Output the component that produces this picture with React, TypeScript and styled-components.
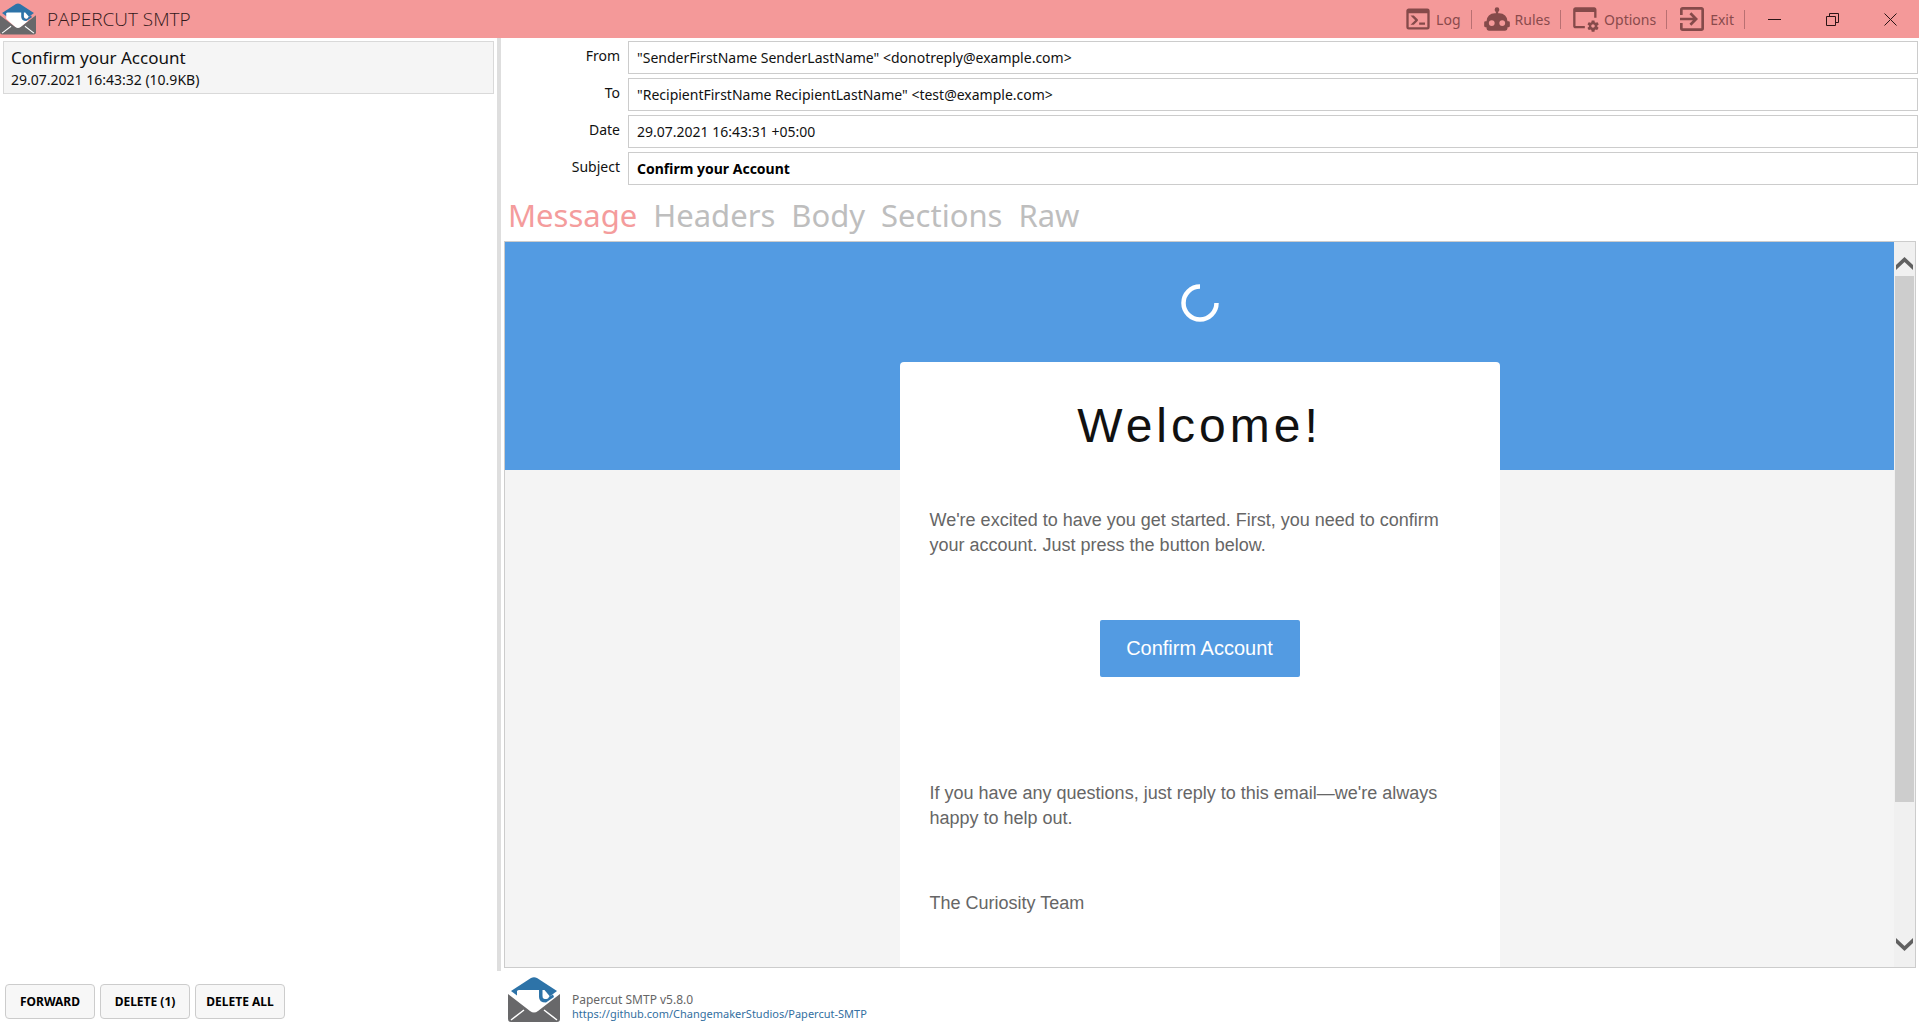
import React from "react";
import styled, { createGlobalStyle, css } from "styled-components";

const ui = `"Noto Sans", "Open Sans", sans-serif`;
const mail = `"Liberation Sans", Arial, sans-serif`;
const blue = "#539be2";

const GlobalStyle = createGlobalStyle`
  *, *::before, *::after { box-sizing: border-box; }
  body { margin: 0; background: #fff; color: #111; font-family: ${ui}; }
  button, input { font-family: inherit; color: inherit; margin: 0; }
  h1, h2, p { margin: 0; }
`;

const Window = styled.div`
  display: flex;
  flex-direction: column;
  height: 100vh;
  overflow: hidden;
`;

const TitleBar = styled.header`
  display: flex;
  align-items: center;
  flex: none;
  height: 38px;
  background: #f49999;
`;

const TitleText = styled.h1`
  flex: 1;
  padding-left: 11px;
  font: 300 19px/38px "Open Sans", "Noto Sans", sans-serif;
  color: #33191b;
`;

const Commands = styled.nav`
  display: flex;
  align-items: center;
`;

const Command = styled.button`
  display: flex;
  align-items: center;
  gap: 4px;
  height: 38px;
  padding: 0 11px;
  border: 0;
  background: none;
  font-size: 14px;
  color: #8a4a4c;
  position: relative;
  &::after {
    content: "";
    position: absolute;
    right: 0;
    top: 10px;
    width: 1px;
    height: 19px;
    background: #b97072;
  }
  svg { width: 28px; height: 28px; fill: #854a4a; }
`;

const Caption = styled.button`
  display: flex;
  align-items: center;
  justify-content: center;
  width: 58px;
  height: 38px;
  padding: 0;
  border: 0;
  background: none;
  svg { width: 13px; height: 13px; fill: none; stroke: #2b1516; }
`;

const Main = styled.div`
  display: flex;
  flex: 1;
  min-height: 0;
`;

const Sidebar = styled.aside`
  display: flex;
  flex-direction: column;
  flex: none;
  width: 501px;
`;

const ListArea = styled.div`
  display: flex;
  flex: 1;
`;

const MessageList = styled.ul`
  flex: 1;
  margin: 0;
  padding: 3px 3px 0;
  list-style: none;
`;

const Splitter = styled.div`
  width: 4px;
  background: #dedede;
`;

const MessageItem = styled.button`
  display: block;
  width: 100%;
  height: 53px;
  padding: 4px 7px;
  border: 1px solid #d9d9d9;
  background: #f5f5f5;
  text-align: left;
`;

const ItemSubject = styled.span`
  display: block;
  font-size: 17px;
  line-height: 24px;
`;

const ItemMeta = styled.span`
  display: block;
  font-size: 14px;
  line-height: 20px;
`;

const Actions = styled.footer`
  display: flex;
  gap: 5px;
  height: 58px;
  padding: 13px 5px 0;
`;

const ActionButton = styled.button`
  width: 90px;
  height: 35px;
  padding: 0 0 1px;
  border: 1px solid #ccc;
  border-radius: 4px;
  background: #f7f7f7;
  font-size: 12px;
  font-weight: 700;
  color: #000;
`;

const Detail = styled.main`
  display: flex;
  flex-direction: column;
  flex: 1;
  min-width: 0;
  padding-left: 3px;
`;

const Fields = styled.div`
  display: grid;
  grid-template-columns: 116px 1fr;
  gap: 4px 8px;
  padding: 3px 1px 0 0;
`;

const FieldLabel = styled.label`
  padding-top: 5px;
  font-size: 14px;
  line-height: 20px;
  text-align: right;
`;

const FieldInput = styled.input<{ $strong?: boolean }>`
  width: 100%;
  height: 33px;
  padding: 0 8px;
  border: 1px solid #ccc;
  background: #fff;
  font-size: 14px;
  ${(p) => p.$strong && css`font-weight: 700; color: #000;`}
`;

const Tabs = styled.div`
  display: flex;
  gap: 16px;
  height: 56px;
  padding: 4px 4px 0;
`;

const Tab = styled.button<{ $active?: boolean }>`
  padding: 0;
  border: 0;
  background: none;
  font-size: 31px;
  line-height: 48px;
  color: ${(p) => (p.$active ? "#f49c9c" : "#bebebe")};
`;

const Preview = styled.section`
  display: flex;
  flex: 1;
  min-height: 0;
  margin-right: 3px;
  border: 1px solid #ccc;
`;

const MailPage = styled.div`
  flex: 1;
  overflow: hidden;
  background: linear-gradient(${blue} 228px, #f4f4f4 228px);
  font-family: ${mail};
  font-size: 18px;
  line-height: 25px;
  color: #666;
`;

const MailLogo = styled.div`
  display: flex;
  justify-content: center;
  height: 120px;
  padding-top: 42px;
  svg { width: 38px; height: 38px; }
`;

const Card = styled.article`
  width: 600px;
  height: 100%;
  margin: 0 auto;
  padding: 40px 30px;
  border-radius: 4px 4px 0 0;
  background: #fff;
`;

const Welcome = styled.h2`
  padding-bottom: 58px;
  font-size: 48px;
  font-weight: 400;
  line-height: 48px;
  letter-spacing: 4px;
  text-align: center;
  color: #111;
`;

const Confirm = styled.a`
  display: block;
  width: 200px;
  height: 57px;
  margin: 62px auto 104px;
  border-radius: 2px;
  background: ${blue};
  font-size: 20px;
  line-height: 56px;
  text-align: center;
  text-decoration: none;
  color: #fff;
`;

const Signature = styled.p`
  padding-top: 60px;
`;

const ScrollBar = styled.div`
  display: flex;
  flex-direction: column;
  flex: none;
  width: 21px;
  background: #f0f0f0;
`;

const ScrollArrow = styled.button`
  display: flex;
  justify-content: center;
  height: 34px;
  padding: 15px 0 0;
  border: 0;
  background: none;
  svg { width: 17px; height: 13px; fill: #606060; }
  &:last-child { padding-top: 5px; }
`;

const ScrollTrack = styled.div`
  flex: 1;
  padding: 0 1px;
`;

const ScrollThumb = styled.div`
  height: 80%;
  background: #cdcdcd;
`;

const About = styled.footer`
  display: flex;
  flex: none;
  gap: 12px;
  height: 61px;
  padding: 9px 4px 0;
  svg { width: 52px; height: 45px; }
`;

const AboutText = styled.div`
  padding-top: 15px;
  font-size: 12px;
  line-height: 15px;
  color: #666;
  a { display: block; font-size: 11px; line-height: 14px; color: #336f9f; text-decoration: none; }
`;

const BarLogo = styled.span`
  display: flex;
  svg { width: 36px; height: 32px; }
`;

const Envelope = () => (
  <svg viewBox="0 0 52 45" aria-hidden="true">
    <path d="M3 14 23 1Q26-.5 29 1L49 14 41 20H11Z" fill="#2d73a8" />
    <path d="M9 14Q10 13 11 13H31V21L41 25 29 35Q26 37 23 35L9 22Z" fill="#fff" />
    <path d="M31 12H34.500V19Q34.500 22 38 22L40.500 20 45 17.500 46 20 38 25.500Q31 25.500 31 20Z" fill="#2d73a8" />
    <path d="M34.500 13H36.500L41.500 19 40 21.500 38 22Q34.500 22 34.500 19Z" fill="#fff" />
    <path d="M0 17 22 34Q26 37 30 34L52 17V42Q52 45 49 45H3Q0 45 0 42Z" fill="#68686a" />
    <path d="M3 43 16 33M49 43 36 33" stroke="#fff" strokeWidth="1.5" />
  </svg>
);

const commands = [
  { label: "Log", box: "0 0 24 24", path: "M20 19V7H4V19H20M20 3A2 2 0 0 1 22 5V19A2 2 0 0 1 20 21H4A2 2 0 0 1 2 19V5C2 3.89 2.9 3 4 3H20M13 17V15H18V17H13M9.58 13L5.57 9H8.4L11.7 12.3C12.09 12.69 12.09 13.33 11.7 13.72L8.42 17H5.59L9.58 13Z" },
  { label: "Rules", box: "0 0 24 24", path: "M12 2A2 2 0 0 1 14 4C14 4.74 13.6 5.39 13 5.73V7H14A7 7 0 0 1 21 14H22A1 1 0 0 1 23 15V18A1 1 0 0 1 22 19H21V20A2 2 0 0 1 19 22H5A2 2 0 0 1 3 20V19H2A1 1 0 0 1 1 18V15A1 1 0 0 1 2 14H3A7 7 0 0 1 10 7H11V5.73C10.4 5.39 10 4.74 10 4A2 2 0 0 1 12 2M7.5 13A2.5 2.5 0 1 0 7.5 18A2.5 2.5 0 0 0 7.5 13M16.5 13A2.5 2.5 0 1 0 16.5 18A2.5 2.5 0 0 0 16.5 13Z" },
  { label: "Options", box: "0 0 24 24", path: "M21.7 18.6V17.6L22.8 16.8C22.9 16.7 23 16.6 22.9 16.5L21.9 14.8C21.9 14.7 21.7 14.7 21.6 14.7L20.4 15.2C20.1 15 19.8 14.8 19.5 14.7L19.3 13.4C19.3 13.3 19.2 13.2 19.1 13.2H17.1C16.9 13.2 16.8 13.3 16.8 13.4L16.6 14.7C16.3 14.9 16.1 15 15.8 15.2L14.6 14.7C14.5 14.7 14.4 14.7 14.3 14.8L13.3 16.5C13.3 16.6 13.3 16.7 13.4 16.8L14.5 17.6V18.6L13.4 19.4C13.3 19.5 13.2 19.6 13.3 19.7L14.3 21.4C14.4 21.5 14.5 21.5 14.6 21.5L15.8 21C16 21.2 16.3 21.4 16.6 21.5L16.8 22.8C16.9 22.9 17 23 17.1 23H19.1C19.2 23 19.3 22.9 19.3 22.8L19.5 21.5C19.8 21.3 20 21.2 20.3 21L21.5 21.4C21.6 21.4 21.7 21.4 21.8 21.3L22.8 19.6C22.9 19.5 22.9 19.4 22.8 19.4L21.7 18.6M18 19.5C17.2 19.5 16.5 18.8 16.5 18S17.2 16.5 18 16.5 19.5 17.2 19.5 18 18.8 19.5 18 19.5M11 18H3V6H19V11H21V4C21 2.9 20.1 2 19 2H3C1.9 2 1 2.9 1 4V18C1 19.1 1.9 20 3 20H11V18Z" },
  { label: "Exit", box: "1.5 1.5 21 21", path: "M19 3H5C3.89 3 3 3.89 3 5V9H5V5H19V19H5V15H3V19A2 2 0 0 0 5 21H19A2 2 0 0 0 21 19V5C21 3.89 20.1 3 19 3M10.08 15.58L11.5 17L16.5 12L11.5 7L10.08 8.41L12.67 11H3V13H12.67L10.08 15.58Z" },
];

const fields = [
  { id: "from", label: "From", value: '"SenderFirstName SenderLastName" <donotreply@example.com>' },
  { id: "to", label: "To", value: '"RecipientFirstName RecipientLastName" <test@example.com>' },
  { id: "date", label: "Date", value: "29.07.2021 16:43:31 +05:00" },
  { id: "subject", label: "Subject", value: "Confirm your Account", strong: true },
];

const tabs = ["Message", "Headers", "Body", "Sections", "Raw"];

export default function App() {
  return (
    <Window>
      <GlobalStyle />
      <TitleBar>
        <BarLogo><Envelope /></BarLogo>
        <TitleText>PAPERCUT SMTP</TitleText>
        <Commands>
          {commands.map((c) => (
            <Command key={c.label} type="button">
              <svg viewBox={c.box} aria-hidden="true"><path d={c.path} fillRule="evenodd" /></svg>
              {c.label}
            </Command>
          ))}
        </Commands>
        <Caption type="button" aria-label="Minimize">
          <svg viewBox="0 0 13 13"><path d="M0 6.5H13" /></svg>
        </Caption>
        <Caption type="button" aria-label="Restore">
          <svg viewBox="0 0 13 13"><path d="M.5 3.5H9.5V12.5H.5ZM3.5 3.5V.5H12.5V9.5H9.5" /></svg>
        </Caption>
        <Caption type="button" aria-label="Close">
          <svg viewBox="0 0 13 13"><path d="M.5.5 12.5 12.5M12.5.5.5 12.5" /></svg>
        </Caption>
      </TitleBar>
      <Main>
        <Sidebar>
          <ListArea>
            <MessageList>
              <li>
                <MessageItem type="button">
                  <ItemSubject>Confirm your Account</ItemSubject>
                  <ItemMeta>29.07.2021 16:43:32 (10.9KB)</ItemMeta>
                </MessageItem>
              </li>
            </MessageList>
            <Splitter />
          </ListArea>
          <Actions>
            <ActionButton type="button">FORWARD</ActionButton>
            <ActionButton type="button">DELETE (1)</ActionButton>
            <ActionButton type="button">DELETE ALL</ActionButton>
          </Actions>
        </Sidebar>
        <Detail>
          <Fields>
            {fields.map((f) => (
              <React.Fragment key={f.id}>
                <FieldLabel htmlFor={f.id}>{f.label}</FieldLabel>
                <FieldInput id={f.id} type="text" readOnly value={f.value} $strong={f.strong} />
              </React.Fragment>
            ))}
          </Fields>
          <Tabs role="tablist">
            {tabs.map((t, i) => (
              <Tab key={t} type="button" role="tab" aria-selected={i === 0} $active={i === 0}>{t}</Tab>
            ))}
          </Tabs>
          <Preview>
            <MailPage>
              <MailLogo>
                <svg viewBox="0 0 38 38" aria-hidden="true">
                  <path d="M19 2.500A16.500 16.500 0 1 0 35.500 19" fill="none" stroke="#fff" strokeWidth="4.500" />
                </svg>
              </MailLogo>
              <Card>
                <Welcome>Welcome!</Welcome>
                <p>We're excited to have you get started. First, you need to confirm your account. Just press the button below.</p>
                <Confirm href="#confirm">Confirm Account</Confirm>
                <p>If you have any questions, just reply to this email—we're always happy to help out.</p>
                <Signature>The Curiosity Team</Signature>
              </Card>
            </MailPage>
            <ScrollBar>
              <ScrollArrow type="button" aria-label="Scroll up">
                <svg viewBox="0 0 17 13"><path d="M8.500 0 17 8V13L8.500 5 0 13V8Z" /></svg>
              </ScrollArrow>
              <ScrollTrack><ScrollThumb /></ScrollTrack>
              <ScrollArrow type="button" aria-label="Scroll down">
                <svg viewBox="0 0 17 13"><path d="M8.500 13 17 5V0L8.500 8 0 0V5Z" /></svg>
              </ScrollArrow>
            </ScrollBar>
          </Preview>
          <About>
            <Envelope />
            <AboutText>
              Papercut SMTP v5.8.0
              <a href="https://github.com/ChangemakerStudios/Papercut-SMTP">https://github.com/ChangemakerStudios/Papercut-SMTP</a>
            </AboutText>
          </About>
        </Detail>
      </Main>
    </Window>
  );
}
